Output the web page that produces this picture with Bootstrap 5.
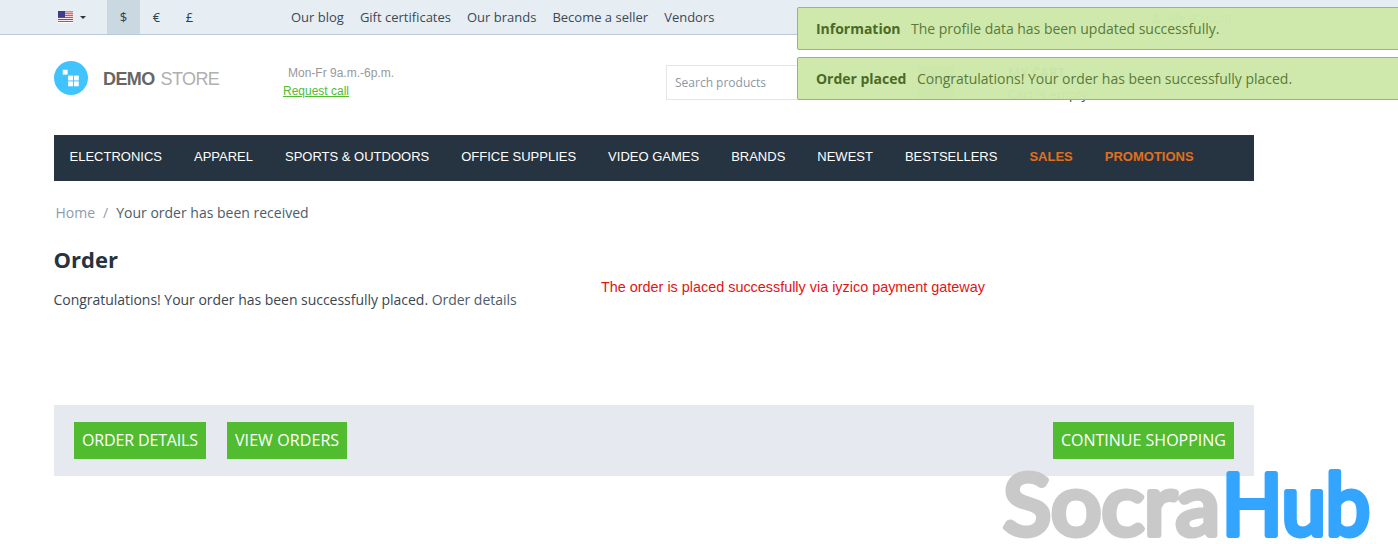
<!DOCTYPE html>
<html lang="en"><head><meta charset="utf-8"><title>Order</title>
<link href="https://cdn.jsdelivr.net/npm/bootstrap@5.3.0/dist/css/bootstrap.min.css" rel="stylesheet">
<style>
html,body{height:544px;overflow:hidden}
body{font-family:"Open Sans",sans-serif;font-size:14px;color:#333e48;background:#fff;position:relative}
.topstrip{height:35px;background:#e6eef4;border-bottom:1px solid #b9cbdb;padding-left:54px}
.flagbox{width:53px;padding-left:4px;gap:7px}
.caret-mini{width:0;height:0;border:3px solid transparent;border-top:3px solid #333;border-bottom:0}
.cur{width:33px;height:34px;line-height:34px;text-align:center;font-size:13px;color:#333e48}
.cur-on{background:#c9d8e1}
.toplinks{margin-left:85px;padding-top:1px;gap:16px;font-size:13px;color:#3d4852}
.userfaint{position:absolute;left:1150px;top:9px;font-size:12px;color:#777;gap:6px}
.headrow{height:86px;margin-bottom:14px;padding-left:54px}
.logotxt{font-family:"Liberation Sans",sans-serif;font-size:18px;margin-left:15px;padding-top:2px;width:116px;letter-spacing:-.6px;word-spacing:1.500px;color:#b0b0b0;white-space:nowrap}
.logotxt b{color:#666}
.hours{font-family:"Liberation Sans",sans-serif;font-size:12px;color:#999;margin-left:64px;margin-top:8px;line-height:18px}
.hours span{display:block;padding-left:5px}
.hours a{color:#51bc2f}
.searchbox{position:absolute;left:666px;top:65px;width:270px;height:35px;border:1px solid #e5e5e5;padding:0 8px;line-height:33px;font-size:12px;color:#8b98a5}
.cartfaint{position:absolute;left:1008px;top:61px;font-size:13px;color:#444;line-height:22px}
.cartico{position:absolute;left:918px;top:65px;width:36px;height:35px;background:#c5c5c5}
.mainnav{margin:0 144px 0 54px;height:46px;background:#263340;padding-left:15.500px;gap:32px;font-family:"Liberation Sans",sans-serif;font-size:13px;line-height:44px}
.mainnav a{color:#fff;text-decoration:none}
.mainnav a.hot{color:#e0701f;font-weight:700}
.crumbs{margin:22px 0 0 55.500px;font-size:14px;line-height:19px;--bs-breadcrumb-margin-bottom:0;--bs-breadcrumb-divider-color:#8d9cad;--bs-breadcrumb-item-padding-x:8px}
.crumbs a{color:#8d9cad;text-decoration:none}
.crumbs .active{color:#4c5c6b}
.pagetitle{margin:22px 0 0 53.500px;font-size:22px;font-weight:700;line-height:30px;color:#263340}
.okline{margin:16px 0 0 53.500px;line-height:20px;color:#3a4652;letter-spacing:-.03px}
.okline a{color:#4c5c6b;text-decoration:none}
.redline{position:absolute;left:601px;top:277px;font-family:"Liberation Sans",sans-serif;font-size:14.400px;color:#e01515}
.actionbar{position:absolute;left:54px;top:405px;width:1200px;height:71px;background:#e6e9f0;padding:17px 20px;gap:21px}
.gbtn{background:#51bc2f;color:#fff;border:0;border-radius:0;height:37px;padding:0 8px;font-size:16px;line-height:37px;white-space:nowrap}
.gbtn:hover{background:#51bc2f;color:#fff}
.tight{letter-spacing:-.15px}
.loose{letter-spacing:.09px}
.notes{position:absolute;left:797px;top:7px;width:620px;gap:7px}
.note{height:43px;background:rgba(205,232,170,.97);border:1px solid #8fbf5f;border-radius:2px;padding:0 18px;line-height:41px;font-size:14px;letter-spacing:-.02px;color:#5a7a3a;white-space:nowrap}
.note b{color:#4a6a25;margin-right:7px}
.wm{position:absolute;left:990px;top:455px;width:400px;height:89px;overflow:visible}
.wm text{font-family:"Lato",sans-serif;font-weight:400;font-size:85px;stroke-width:6px;stroke-linejoin:round;stroke-linecap:round;paint-order:stroke}
.wm-a{fill:#c9c9c9;stroke:#c9c9c9}
.wm-b{fill:#33a5ff;stroke:#33a5ff}
</style></head><body>
<div class="topstrip d-flex align-items-center">
 <div class="flagbox d-flex align-items-center">
  <svg width="15" height="12" viewBox="0 0 15 12"><rect width="15" height="12" fill="#fff"/><path d="M0 .9h15M0 2.800h15M0 4.700h15M0 6.600h15M0 8.500h15M0 10.400h15" stroke="#c8323c" stroke-width="1"/><rect width="7" height="6.500" fill="#3c3b8e"/></svg>
  <span class="caret-mini"></span>
 </div>
 <div class="cur cur-on">$</div><div class="cur">€</div><div class="cur">£</div>
 <div class="toplinks d-flex"><span>Our blog</span><span>Gift certificates</span><span>Our brands</span><span>Become a seller</span><span>Vendors</span></div>
</div>
<div class="userfaint d-flex align-items-center"><svg width="12" height="12" viewBox="0 0 12 12"><circle cx="6" cy="3.500" r="3" fill="#999"/><path d="M1 12c0-4 2-5 5-5s5 1 5 5z" fill="#999"/></svg><span>My account</span></div>
<div class="headrow d-flex align-items-center">
 <svg width="34" height="34" viewBox="0 0 35 35"><circle cx="17.500" cy="17.500" r="17.500" fill="#40c4ff"/><g fill="#fff"><rect x="9" y="9" width="5" height="5"/><rect x="14.500" y="15" width="5" height="5"/><rect x="20.500" y="15" width="5" height="5"/><rect x="14.500" y="21" width="5" height="5"/><rect x="20.500" y="21" width="5" height="5"/></g></svg>
 <div class="logotxt"><b>DEMO</b> STORE</div>
 <div class="hours"><span>Mon-Fr 9a.m.-6p.m.</span><a href="#">Request call</a></div>
</div>
<div class="searchbox">Search products</div><div class="cartico"></div>
<div class="cartfaint"><b>MY CART</b><br>Cart is empty</div>
<nav class="mainnav d-flex">
 <a href="#">ELECTRONICS</a><a href="#">APPAREL</a><a href="#">SPORTS &amp; OUTDOORS</a><a href="#">OFFICE SUPPLIES</a><a href="#">VIDEO GAMES</a><a href="#">BRANDS</a><a href="#">NEWEST</a><a href="#">BESTSELLERS</a><a href="#" class="hot">SALES</a><a href="#" class="hot">PROMOTIONS</a>
</nav>
<ol class="breadcrumb crumbs"><li class="breadcrumb-item"><a href="#">Home</a></li><li class="breadcrumb-item active">Your order has been received</li></ol>
<h1 class="pagetitle">Order</h1>
<p class="okline">Congratulations! Your order has been successfully placed. <a href="#">Order details</a></p>
<div class="redline">The order is placed successfully via iyzico payment gateway</div>
<div class="actionbar d-flex">
 <a class="btn gbtn tight" href="#">ORDER DETAILS</a><a class="btn gbtn loose" href="#">VIEW ORDERS</a><a class="btn gbtn ms-auto" href="#">CONTINUE SHOPPING</a>
</div>
<div class="notes d-flex flex-column">
 <div class="note"><b>Information</b> The profile data has been updated successfully.</div>
 <div class="note"><b>Order placed</b> Congratulations! Your order has been successfully placed.</div>
</div>
<svg class="wm" viewBox="0 0 400 89"><text class="wm-a" x="13" y="80" textLength="217" lengthAdjust="spacingAndGlyphs">Socra</text><text class="wm-b" x="232" y="80" textLength="148" lengthAdjust="spacingAndGlyphs">Hub</text></svg>
<script src="https://cdn.jsdelivr.net/npm/bootstrap@5.3.0/dist/js/bootstrap.bundle.min.js"></script>
</body></html>
